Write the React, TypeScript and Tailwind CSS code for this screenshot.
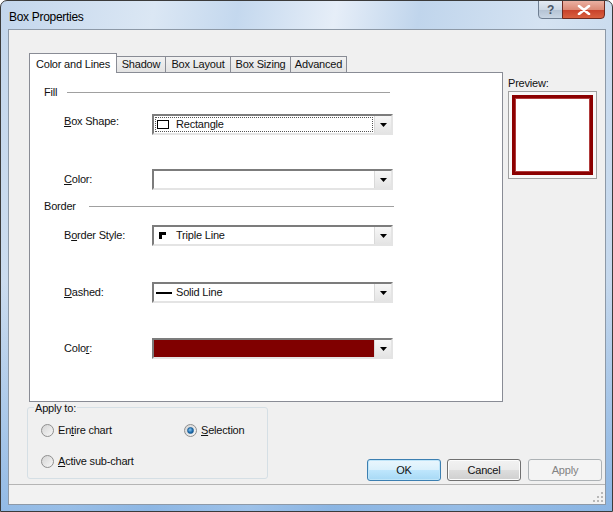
import React from 'react';

function U({ children }: { children: React.ReactNode }) {
  return <span className="underline underline-offset-[1px]">{children}</span>;
}

function Arrow() {
  return (
    <div className="flex w-[17px] items-center justify-center border-l border-[#d9d9d9] bg-[linear-gradient(#f7f7f7,#e4e4e4)]">
      <svg width="7" height="4" viewBox="0 0 7 4">
        <path d="M0 0h7L3.5 4z" fill="#000" />
      </svg>
    </div>
  );
}

function Combo({ children, fill, focus }: { children?: React.ReactNode; fill?: boolean; focus?: boolean }) {
  return (
    <div className="flex h-[21px] w-[241px] border-2 border-t-[#7c7c7c] border-l-[#7c7c7c] border-r-[#e4e4e4] border-b-[#e4e4e4] bg-white">
      <div className={fill ? 'flex-1 bg-[#800000]' : 'flex flex-1 p-[1px]'}>
        {!fill && (
          <div className={`flex flex-1 items-center ${focus ? 'border border-dotted border-[#555]' : 'border border-transparent'}`}>
            {children}
          </div>
        )}
      </div>
      <Arrow />
    </div>
  );
}

function Row({ label, mt, children, labelShift }: { label: React.ReactNode; mt: string; children: React.ReactNode; labelShift?: boolean }) {
  return (
    <div className={`flex items-center pl-[20px] ${mt}`}>
      <div className={`w-[88px] ${labelShift ? '-mt-[7px]' : ''}`}>{label}</div>
      {children}
    </div>
  );
}

function Radio({ checked, children }: { checked?: boolean; children: React.ReactNode }) {
  return (
    <div className="flex h-[14px] items-center gap-[4px]">
      <div className="flex h-[13px] w-[13px] items-center justify-center rounded-full border border-[#8f8f8f] bg-[linear-gradient(135deg,#d4d4d4,#f7f7f7)]">
        {checked && (
          <div className="h-[7px] w-[7px] rounded-full border border-[#1d5f96] bg-[radial-gradient(circle_at_40%_35%,#8cc6ee,#1f6fb2_60%,#0d3f70)]" />
        )}
      </div>
      <span>{children}</span>
    </div>
  );
}

function Button({ children, kind }: { children: React.ReactNode; kind?: 'focus' | 'disabled' }) {
  const base = 'flex h-[22px] w-[74px] items-center justify-center rounded-[3px] border';
  if (kind === 'focus')
    return (
      <div className={`${base} border-[#3c7fb1] bg-[linear-gradient(#eaf6fd_0%,#d9f0fc_50%,#bee6fd_51%,#a7d9f5_100%)] shadow-[inset_0_0_0_1px_#bfe5f9]`}>
        {children}
      </div>
    );
  if (kind === 'disabled')
    return <div className={`${base} border-[#adb2b5] bg-[#f4f4f4] text-[#838383]`}>{children}</div>;
  return (
    <div className={`${base} border-[#707070] bg-[linear-gradient(#f2f2f2_0%,#ebebeb_50%,#dddddd_51%,#cfcfcf_100%)] shadow-[inset_0_0_0_1px_#fcfcfc]`}>
      {children}
    </div>
  );
}

const tabs = ['Shadow', 'Box Layout', 'Box Sizing', 'Advanced'];
const tabWidths = ['w-[50px]', 'w-[66px]', 'w-[61px]', 'w-[57px]'];

export default function App() {
  return (
    <div className="h-[512px] w-[613px] bg-white">
      <div className="flex h-[512px] w-[613px] flex-col overflow-hidden rounded-t-[7px] border border-[#3b3b3b] bg-[linear-gradient(180deg,transparent_55%,rgba(95,155,220,0.55)_100%),linear-gradient(100deg,#c3d6ec_0%,#dbe7f4_22%,#c4d8ee_34%,#e6eef8_48%,#c0d5ec_60%,#d5e3f2_78%,#bfd4eb_100%)] font-['Liberation_Sans',Arial,sans-serif] text-[11px] tracking-[-0.2px] text-[#111]">
        {/* title bar */}
        <div className="flex h-[28px] flex-none items-start">
          <div className="mt-[7px] pl-[8px] text-[12px] tracking-[-0.3px] text-black">Box Properties</div>
          <div className="ml-auto mr-[7px] flex -mt-px">
            <div className="flex h-[19px] w-[25px] items-center justify-center rounded-bl-[4px] border border-[#6f7f92] bg-[linear-gradient(#e3eaf2_0%,#cdd8e4_50%,#b3c2d3_51%,#c9d6e4_100%)] text-[12px] font-bold text-[#4a5565]">
              ?
            </div>
            <div className="-ml-px flex h-[19px] w-[43px] items-center justify-center rounded-br-[4px] border border-[#6d2a20] bg-[linear-gradient(#eab0a2_0%,#dc8a76_50%,#c7402a_51%,#d9603f_100%)]">
              <svg width="14" height="10" viewBox="0 0 14 10">
                <path d="M2 1l10 8M12 1L2 9" stroke="#fff" strokeWidth="2.6" strokeLinecap="round" />
              </svg>
            </div>
          </div>
        </div>

        <div className="flex flex-1">
          <div className="w-[7px] flex-none" />
          {/* client area */}
          <div className="flex h-[476px] w-[598px] flex-none flex-col border border-[#8d99a7] bg-[#f0f0f0]">
            <div className="flex h-[454px] flex-none flex-col pl-[20px] pt-[23px]">
              <div className="flex">
                {/* tab control */}
                <div className="flex w-[474px] flex-col">
                  <div className="flex h-[19px] items-end">
                    <div className="relative z-10 -mb-px flex h-[20px] w-[88px] items-start justify-center border border-b-0 border-[#898c95] bg-white pt-[2px]">
                      Color and Lines
                    </div>
                    {tabs.map((t, i) => (
                      <div
                        key={t}
                        className={`-ml-px flex h-[16px] ${tabWidths[i]} items-center justify-center border border-b-0 border-[#898c95] bg-[linear-gradient(#f2f2f2,#e3e3e3)] first:ml-0`}
                      >
                        {t}
                      </div>
                    ))}
                  </div>
                  <div className="flex h-[330px] flex-col border border-[#898c95] bg-white pl-[14px]">
                    <div className="mt-[12px] flex h-[14px] items-center">
                      <div className="w-[23px]">Fill</div>
                      <div className="h-px w-[323px] bg-[#a0a0a0]" />
                    </div>
                    <Row label={<><U>B</U>ox Shape:</>} mt="mt-[15px]" labelShift>
                      <Combo focus>
                        <div className="flex w-[20px] pl-[1px]">
                          <div className="h-[9px] w-[12px] border border-black" />
                        </div>
                        <span>Rectangle</span>
                      </Combo>
                    </Row>
                    <Row label={<><U>C</U>olor:</>} mt="mt-[34px]">
                      <Combo />
                    </Row>
                    <div className="mt-[9px] flex h-[14px] items-center">
                      <div className="w-[45px]">Border</div>
                      <div className="h-px w-[305px] bg-[#a0a0a0]" />
                    </div>
                    <Row label={<>B<U>o</U>rder Style:</>} mt="mt-[12px]">
                      <Combo>
                        <div className="flex w-[20px] pl-[3px]">
                          <svg width="7" height="7" viewBox="0 0 7 7">
                            <path d="M0 0h7v3H3v4H0z" fill="#000" />
                          </svg>
                        </div>
                        <span>Triple Line</span>
                      </Combo>
                    </Row>
                    <Row label={<><U>D</U>ashed:</>} mt="mt-[36px]">
                      <Combo>
                        <div className="flex w-[20px] items-center">
                          <div className="h-[2px] w-[16px] bg-black" />
                        </div>
                        <span>Solid Line</span>
                      </Combo>
                    </Row>
                    <Row label={<>Colo<U>r</U>:</>} mt="mt-[35px]">
                      <Combo fill />
                    </Row>
                  </div>
                </div>

                {/* preview */}
                <div className="ml-[5px] flex flex-col pt-[23px]">
                  <div className="h-[14px] leading-[14px]">Preview:</div>
                  <div className="mt-[1px] flex h-[88px] w-[89px] border border-[#a0a0a0] bg-[#f8f8f8] p-[3px]">
                    <div className="flex-1 border-[3px] border-[#8b0000] bg-white shadow-[inset_0_0_0_1px_#b03a3a]" />
                  </div>
                </div>
              </div>

              {/* bottom row */}
              <div className="flex">
                <div className="relative -ml-[2px] h-[77px] w-[241px] pt-[5px]">
                  <div className="h-[72px] rounded-[3px] border border-[#d5dfe5] pl-[13px] pt-[15px]">
                    <div className="grid grid-cols-[143px_auto] gap-y-[17px]">
                      <Radio>
                        En<U>t</U>ire chart
                      </Radio>
                      <Radio checked>
                        <U>S</U>election
                      </Radio>
                      <Radio>
                        <U>A</U>ctive sub-chart
                      </Radio>
                    </div>
                  </div>
                  <div className="absolute left-[7px] top-0 bg-[#f0f0f0] px-[1px] leading-[12px]">Apply to:</div>
                </div>
                <div className="ml-auto mr-[3px] mt-[57px] flex">
                  <Button kind="focus">OK</Button>
                  <div className="ml-[6px]">
                    <Button>Cancel</Button>
                  </div>
                  <div className="ml-[7px]">
                    <Button kind="disabled">Apply</Button>
                  </div>
                </div>
              </div>
            </div>
            <div className="h-px flex-none bg-[#b5b5b5]" />
            <div className="flex flex-1 items-end justify-end bg-[#f2f2f2] pb-[1px] pr-[1px]">
              <svg width="12" height="12" viewBox="0 0 12 12">
                <g fill="#b8b8b8">
                  <rect x="9" y="1" width="2" height="2" />
                  <rect x="9" y="5" width="2" height="2" />
                  <rect x="5" y="5" width="2" height="2" />
                  <rect x="9" y="9" width="2" height="2" />
                  <rect x="5" y="9" width="2" height="2" />
                  <rect x="1" y="9" width="2" height="2" />
                </g>
              </svg>
            </div>
          </div>
          <div className="w-[6px] flex-none" />
        </div>
      </div>
    </div>
  );
}
